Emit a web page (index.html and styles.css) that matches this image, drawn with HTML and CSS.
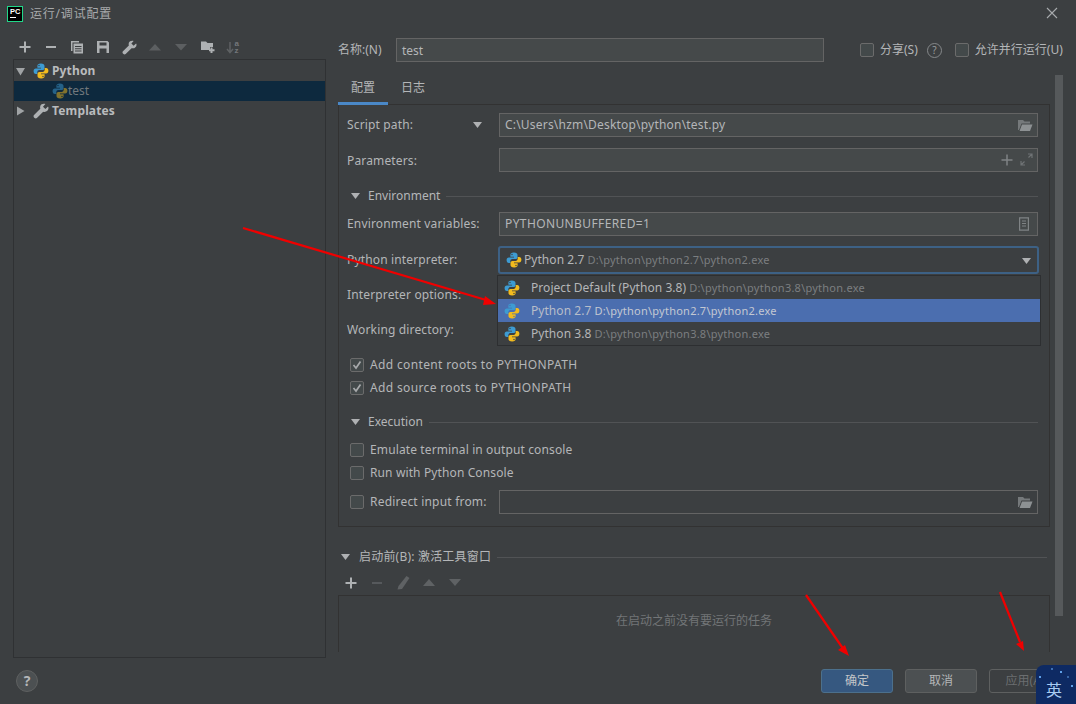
FILE: index.html
```html
<!DOCTYPE html>
<html lang="zh">
<head>
<meta charset="utf-8">
<title>运行/调试配置</title>
<link rel="stylesheet" href="styles.css">
</head>
<body>
<svg class="defs" width="0" height="0" aria-hidden="true">
  <symbol id="py" viewBox="0 0 16 16">
    <path fill="#3d9bd2" d="M7.9 .6C5.2 .6 4.4 1.7 4.4 3V4.8H8V5.5H2.9C1.4 5.5 .6 6.6 .6 8.2S1.4 11 2.9 11H4.3V9.2C4.3 8 5.2 7.1 6.4 7.1H9.6C10.7 7.1 11.5 6.3 11.5 5.2V3C11.5 1.5 10.3 .6 7.9 .6ZM6 1.8A.7 .7 0 1 1 6 3.2 .7 .7 0 0 1 6 1.8Z"/>
    <path fill="#f2bb1e" d="M8.1 15.4C10.8 15.4 11.6 14.3 11.6 13V11.2H8V10.5H13.1C14.6 10.5 15.4 9.4 15.4 7.8S14.6 5 13.1 5H11.7V6.8C11.7 8 10.8 8.9 9.6 8.9H6.4C5.3 8.9 4.5 9.7 4.5 10.8V13C4.5 14.5 5.7 15.4 8.1 15.4ZM10 14.2A.7 .7 0 1 1 10 12.8 .7 .7 0 0 1 10 14.2Z"/>
  </symbol>
  <symbol id="wrench" viewBox="0 0 16 16">
    <path fill="currentColor" d="M15 3.6 12.4 6.1 10 3.7 12.4 1.1C10.4 .3 8 1 7.3 3 7 4 7 5 7.3 5.8L1 12.1C.4 12.8 .4 13.8 1 14.4L1.6 15C2.2 15.6 3.2 15.6 3.9 15L10.2 8.7C12.8 9.6 15.6 7.6 15.5 5 15.5 4.5 15.3 4 15 3.6Z"/>
  </symbol>
  <symbol id="folder" viewBox="0 0 16 16">
    <path fill="#75797b" d="M1 3H6L7.5 4.5H13V6.5H4.5L2 13H1Z"/>
    <path fill="#8d9193" d="M5 7.5H15.5L13 14H2.6Z"/>
  </symbol>
</svg>

<header class="titlebar">
  <span class="logo"><b>PC</b><i></i></span>
  <span class="title">运行/调试配置</span>
  <svg class="close" width="12" height="12" viewBox="0 0 12 12"><path d="M1 1 11 11M11 1 1 11" stroke="#a8abad" stroke-width="1.1"/></svg>
</header>

<main class="main">
  <section class="side">
    <div class="toolbar">
      <span class="tool"><svg width="14" height="14" viewBox="0 0 14 14"><path d="M7 1.5V12.500M1.500 7H12.500" class="st2"/></svg></span>
      <span class="tool"><svg width="14" height="14" viewBox="0 0 14 14"><path d="M2 7H12" class="st2"/></svg></span>
      <span class="tool"><svg width="14" height="14" viewBox="0 0 14 14"><path fill="#aeb1b3" d="M1 1H9V2.500H2.500V11H1Z"/><path fill="#aeb1b3" fill-rule="evenodd" d="M3.500 3.500H13V13.500H3.500ZM5 6V7H11.500V6ZM5 8.300V9.300H11.500V8.300ZM5 10.600V11.600H11.500V10.600Z"/></svg></span>
      <span class="tool"><svg width="14" height="14" viewBox="0 0 14 14"><path fill="#aeb1b3" fill-rule="evenodd" d="M1 1H11.500L13 2.500V13H1ZM3.500 2.500V5.500H10.500V2.500ZM3.500 8.500V13H10.500V8.500Z"/></svg></span>
      <span class="tool"><svg class="ic-wrench" width="15" height="15"><use href="#wrench"/></svg></span>
      <span class="tool"><svg width="14" height="8" viewBox="0 0 14 8"><path d="M7 1 13 7.500H1Z" fill="#5c5f61"/></svg></span>
      <span class="tool"><svg width="14" height="8" viewBox="0 0 14 8"><path d="M7 7.500 13 1H1Z" fill="#5c5f61"/></svg></span>
      <span class="tool"><svg width="15" height="14" viewBox="0 0 15 14"><path fill="#aeb1b3" d="M1 1.500H6L7.500 3H13V7H10V10H1Z"/><path d="M11.500 7.500V13M9 10.300H14.500" class="st2"/></svg></span>
      <span class="tool"><svg width="15" height="16" viewBox="0 0 15 16"><path d="M4 3V13M1 10 4 13.500 7 10" fill="none" stroke="#5f6264" stroke-width="1.500"/><text x="8.500" y="7" class="az">a</text><text x="8.500" y="14" class="az">z</text></svg></span>
    </div>
    <div class="tree">
      <div class="tree-row">
        <svg class="tw" width="9" height="9" viewBox="0 0 9 9"><path d="M0 1H9L4.500 8.500Z" fill="#a0a3a5"/></svg>
        <svg class="tree-ic" width="16" height="16"><use href="#py"/></svg>
        <b>Python</b>
      </div>
      <div class="tree-row sel">
        <svg class="tree-ic dim" width="16" height="16"><use href="#py"/></svg>
        <span>test</span>
      </div>
      <div class="tree-row">
        <svg class="tw" width="9" height="10" viewBox="0 0 9 10"><path d="M1 .5V9.500L8.500 5Z" fill="#a0a3a5"/></svg>
        <svg class="tree-ic ic-wrench" width="16" height="16"><use href="#wrench"/></svg>
        <b>Templates</b>
      </div>
    </div>
  </section>

  <section class="content">
    <div class="name-row">
      <label class="name-label">名称:(N)</label>
      <div class="field name-field">test</div>
      <span class="cb share"></span><span class="opt">分享(S)</span>
      <span class="qm">?</span>
      <span class="cb par"></span><span class="opt">允许并行运行(U)</span>
    </div>
    <div class="scroll-wrap">
      <div class="scroll-body">
        <div class="tabs">
          <span class="tab on">配置</span>
          <span class="tab">日志</span>
        </div>
        <div class="panel">
          <div class="row r-script">
            <span class="lab lab-short">Script path:</span>
            <svg class="drop" width="9" height="6" viewBox="0 0 9 6"><path d="M0 0H9L4.500 6Z" fill="#afb1b3"/></svg>
            <div class="field grow">C:\Users\hzm\Desktop\python\test.py<svg class="fo" width="16" height="16"><use href="#folder"/></svg></div>
          </div>
          <div class="row r-gap">
            <span class="lab lab-low">Parameters:</span>
            <div class="field grow">
              <span class="fi-icons">
                <svg width="12" height="12" viewBox="0 0 12 12"><path d="M6 .5V11.500M.5 6H11.500" stroke="#7f8385" stroke-width="1.500"/></svg>
                <svg width="13" height="13" viewBox="0 0 13 13"><path d="M8 1H12V5M12 1 8.500 4.500M5 12H1V8M1 12 4.500 8.500" fill="none" stroke="#6f7375" stroke-width="1.200"/></svg>
              </span>
            </div>
          </div>
          <div class="sect sect-env">
            <svg class="sect-tri" width="9" height="6" viewBox="0 0 9 6"><path d="M0 0H9L4.500 6Z" fill="#afb1b3"/></svg>
            <span>Environment</span><i></i>
          </div>
          <div class="row r-env">
            <span class="lab">Environment variables:</span>
            <div class="field grow caps">PYTHONUNBUFFERED=1<svg class="fo doc" width="14" height="14" viewBox="0 0 14 14"><path fill="none" stroke="#7f8385" stroke-width="1.200" d="M2.600 .8H11.400V13.200H2.600Z"/><path stroke="#7f8385" d="M5 4H9M5 6.500H9M5 9H9"/></svg></div>
          </div>
          <div class="row r-interp">
            <span class="lab">Python interpreter:</span>
            <div class="combo">
              <svg class="pi" width="16" height="16"><use href="#py"/></svg>
              <span class="pname">Python 2.7</span> <span class="ppath">D:\python\python2.7\python2.exe</span>
              <svg class="combo-tri" width="9" height="6" viewBox="0 0 9 6"><path d="M0 0H9L4.500 6Z" fill="#afb1b3"/></svg>
            </div>
          </div>
          <div class="row r-opts">
            <span class="lab lab-low">Interpreter options:</span>
            <div class="field grow"></div>
          </div>
          <div class="row r-gap">
            <span class="lab lab-low">Working directory:</span>
            <div class="field grow"></div>
          </div>
          <div class="check wide r-c1"><span class="cb on"><svg width="10" height="10" viewBox="0 0 10 10"><path d="M1.500 5 4 8 8.500 1.500" fill="none" stroke="#a7a9ab" stroke-width="1.700"/></svg></span>Add content roots to PYTHONPATH</div>
          <div class="check wide"><span class="cb on"><svg width="10" height="10" viewBox="0 0 10 10"><path d="M1.500 5 4 8 8.500 1.500" fill="none" stroke="#a7a9ab" stroke-width="1.700"/></svg></span>Add source roots to PYTHONPATH</div>
          <div class="sect sect-exec">
            <svg class="sect-tri" width="9" height="6" viewBox="0 0 9 6"><path d="M0 0H9L4.500 6Z" fill="#afb1b3"/></svg>
            <span>Execution</span><i></i>
          </div>
          <div class="check r-c3"><span class="cb"></span>Emulate terminal in output console</div>
          <div class="check"><span class="cb"></span>Run with Python Console</div>
          <div class="row r-red">
            <span class="red-lab"><span class="cb"></span>Redirect input from:</span>
            <div class="field grow off"><svg class="fo" width="16" height="16"><use href="#folder"/></svg></div>
          </div>
        </div>
        <div class="before">
          <svg class="sect-tri" width="9" height="6" viewBox="0 0 9 6"><path d="M0 0H9L4.500 6Z" fill="#afb1b3"/></svg>
          <span>启动前(B): 激活工具窗口</span><i></i>
        </div>
        <div class="b-tools">
          <span class="btool"><svg width="12" height="12" viewBox="0 0 12 12"><path d="M6 .5V11.500M.5 6H11.500" class="st2"/></svg></span>
          <span class="btool"><svg width="12" height="12" viewBox="0 0 12 12"><path d="M1 6H11" stroke="#5c5f61" stroke-width="1.700"/></svg></span>
          <span class="btool"><svg width="15" height="15" viewBox="0 0 15 15"><path d="M10.500 1 13.500 3 6 14 1.500 14.500 2.500 11Z" fill="#5f6264"/></svg></span>
          <span class="btool"><svg width="12" height="7" viewBox="0 0 12 7"><path d="M6 0 12 7H0Z" fill="#5f6264"/></svg></span>
          <span class="btool"><svg width="12" height="7" viewBox="0 0 12 7"><path d="M6 7 12 0H0Z" fill="#5f6264"/></svg></span>
        </div>
        <div class="task-box">在启动之前没有要运行的任务</div>
      </div>
      <div class="scrollbar"></div>
    </div>
  </section>
</main>

<footer class="footer">
  <span class="help">?</span>
  <span class="btn def">确定</span>
  <span class="btn">取消</span>
  <span class="btn dis">应用(A)</span>
</footer>

<div class="popup">
  <div class="pop-row"><svg width="16" height="16"><use href="#py"/></svg><span class="pname">Project Default (Python 3.8)</span> <span class="ppath">D:\python\python3.8\python.exe</span></div>
  <div class="pop-row cur"><svg width="16" height="16"><use href="#py"/></svg><span class="pname">Python 2.7</span> <span class="ppath">D:\python\python2.7\python2.exe</span></div>
  <div class="pop-row"><svg width="16" height="16"><use href="#py"/></svg><span class="pname">Python 3.8</span> <span class="ppath">D:\python\python3.8\python.exe</span></div>
</div>

<svg class="arrows" width="1076" height="704" viewBox="0 0 1076 704" aria-hidden="true">
  <g stroke="#f00000" stroke-width="2.200" fill="#f00000">
    <path d="M243 228 486 300"/><path stroke="none" d="M496 304 483 305 485 296Z"/>
    <path d="M806 595 844 650"/><path stroke="none" d="M849 656 838 650 845 645Z"/>
    <path d="M1000 592 1020 642"/><path stroke="none" d="M1024 651 1016 644 1023 641Z"/>
  </g>
</svg>

<div class="ime">
  <i class="star s1"></i><i class="star s2"></i><i class="star s3"></i><i class="star s4"></i><i class="star s5"></i>
  英
</div>
</body>
</html>
```
FILE: styles.css
```css
* { box-sizing: border-box; }
html, body { margin: 0; padding: 0; }
body {
  position: relative;
  width: 1076px;
  height: 704px;
  overflow: hidden;
  background: #3c3f41;
  color: #b4b6b8;
  font: 12px/16px "Noto Sans", "Noto Sans CJK SC", sans-serif;
}
.defs { position: absolute; }
.titlebar {
  height: 38px;
  padding: 6px 18px 0 7px;
  display: flex;
  align-items: flex-start;
}
.logo {
  width: 16px; height: 16px;
  background: #000;
  border: 1px solid #21d789;
  color: #fff;
  display: flex;
  flex-direction: column;
  padding: 1px 0 0 2px;
}
.logo b { font: 700 7.5px/8px "Liberation Sans", sans-serif; }
.logo i { display: block; width: 6px; height: 1px; background: #fff; margin-top: 1px; }
.title { margin-left: 7px; color: #a7a9ab; line-height: 16px; letter-spacing: .8px; }
.close { margin-left: auto; margin-top: 1px; }

.main { display: flex; height: 620px; padding-left: 13px; }
.side { width: 313px; margin-right: 12px; display: flex; flex-direction: column; }
.toolbar { height: 21px; display: flex; margin-left: -1px; }
.tool { width: 26px; height: 18px; display: flex; align-items: center; justify-content: center; }
.st2 { stroke: #aeb1b3; stroke-width: 2; fill: none; }
.az { font: 700 8px "Liberation Sans", sans-serif; fill: #74777a; }
.ic-wrench { color: #aeb1b3; }
.tree { flex: 1; border: 1px solid #2f3133; padding-top: 1px; }
.tree-row { height: 20px; display: flex; align-items: center; padding-left: 2px; font-size: 12px; color: #b9bbbd; }
.tree-row b { font-weight: 700; margin-left: 3px; letter-spacing: .15px; }
.tw { width: 9px; margin-right: 8px; }
.tree-ic { flex: none; }
.tree-row.sel { background: #0d293e; color: #72787c; padding-left: 38px; }
.tree-ic.dim { opacity: .5; }

.content { width: 727px; display: flex; flex-direction: column; }
.name-row { height: 24px; display: flex; align-items: center; flex: none; }
.name-label { width: 58px; color: #b4b6b8; }
.field {
  height: 24px;
  background: #45494a;
  border: 1px solid #646464;
  padding: 0 5px;
  line-height: 21px;
  color: #b4b6b8;
  display: flex;
  align-items: center;
  position: relative;
}
.panel .field { padding-bottom: 2px; letter-spacing: .2px; }
.panel .field.caps { letter-spacing: .39px; }
.name-field { width: 428px; }
.cb {
  display: inline-flex;
  align-items: center;
  justify-content: center;
  width: 14px; height: 14px;
  border: 1px solid #6b6b6b;
  border-radius: 2px;
  background: #43494a;
  flex: none;
}
.share { margin-left: 36px; }
.opt { margin-left: 6px; }
.qm {
  width: 15px; height: 15px; margin-left: 9px;
  border: 1px solid #85888a; border-radius: 50%;
  font-size: 10px; line-height: 13px; text-align: center; color: #9a9c9e;
}
.par { margin-left: 13px; }

.scroll-wrap { display: flex; gap: 5px; margin-top: 13px; flex: 1; min-height: 0; }
.scroll-body { width: 712px; flex: none; display: flex; flex-direction: column; overflow: hidden; height: 577px; }
.scrollbar { width: 8px; height: 541px; background: #56595b; flex: none; }
.tabs { display: flex; height: 29px; flex: none; position: relative; }
.tab { width: 50px; height: 30px; text-align: center; padding-top: 5px; font-size: 12px; }
.tab.on { border-bottom: 3px solid #4a88c7; position: relative; z-index: 1; }
.panel {
  flex: none;
  height: 423px;
  border: 1px solid #323232;
  padding: 8px 11px 0 8px;
}
.row { display: flex; align-items: center; height: 24px; }
.lab { width: 152px; flex: none; letter-spacing: .15px; }
.lab-short { width: 126px; }
.lab-low { padding-top: 2px; }
.drop { margin-right: 17px; flex: none; }
.grow { flex: 1; }
.r-gap { margin-top: 11px; }
.fo { position: absolute; right: 4px; top: 3px; }
.fo.doc { right: 6px; top: 4px; }
.fi-icons { position: absolute; right: 4px; top: 4px; display: flex; align-items: center; gap: 7px; }
.sect { display: flex; align-items: center; height: 18px; padding-left: 4px; }
.sect-tri { flex: none; margin-right: 8px; }
.sect i, .before i { flex: 1; height: 1px; background: #515355; margin-left: 6px; }
.sect-env { margin-top: 15px; }
.r-env { margin-top: 7px; }
.r-interp { margin-top: 10px; height: 28px; }
.combo {
  flex: 1;
  height: 28px;
  margin-left: -1px;
  margin-right: -1px;
  border: 2px solid #3d6185;
  border-radius: 3px;
  display: flex;
  align-items: center;
  padding-left: 6px;
  position: relative;
  white-space: pre;
}
.pi { margin-right: 2px; }
.pname { color: #b4b6b8; letter-spacing: .05px; }
.ppath { color: #7b7e80; font-size: 11px; margin-left: 3px; letter-spacing: .24px; }
.combo-tri { position: absolute; right: 6px; top: 10px; }
.r-opts { margin-top: 8px; }
.check { display: flex; align-items: center; height: 23px; padding-left: 3px; letter-spacing: .12px; }
.check.wide { letter-spacing: .36px; }
.check .cb { margin-right: 6px; }
.r-c1 { margin-top: 12px; }
.sect-exec { margin-top: 13px; height: 20px; }
.r-c3 { margin-top: 6px; }
.r-red { margin-top: 6px; }
.red-lab { width: 152px; flex: none; display: flex; align-items: center; padding-left: 3px; white-space: nowrap; letter-spacing: .2px; }
.red-lab .cb { margin-right: 6px; }
.field.off { background: #3c3f41; }

.before { display: flex; align-items: center; height: 18px; margin-top: 21px; padding: 0 3px; letter-spacing: .2px; }
.before .sect-tri { margin-right: 9px; }
.b-tools { display: flex; height: 25px; margin-top: 4px; flex: none; align-items: center; }
.btool { width: 26px; display: flex; justify-content: center; align-items: center; }
.task-box {
  border: 1px solid #323232;
  border-bottom: 0;
  height: 57px;
  flex: none;
  text-align: center;
  padding-top: 17px;
  color: #727577;
}

.footer { display: flex; align-items: center; height: 46px; padding: 0 0 0 16px; }
.help {
  width: 22px; height: 22px;
  border-radius: 50%;
  background: #4c5052;
  border: 1px solid #5e6060;
  color: #b4b6b8;
  font: 700 14px/20px "Noto Sans", sans-serif;
  text-align: center;
  margin-right: 783px;
}
.btn {
  width: 72px; height: 24px;
  background: #4c5052;
  border: 1px solid #5e6060;
  border-radius: 3px;
  text-align: center;
  line-height: 22px;
  margin-right: 12px;
  flex: none;
}
.btn.def { background: #365880; border-color: #4c708c; color: #c4c6c8; }
.btn.dis { background: transparent; color: #6b6e70; }

.popup {
  position: absolute;
  left: 497px; top: 275px;
  width: 544px; height: 71px;
  background: #3c3f41;
  border: 1px solid #2d2f31;
}
.pop-row { height: 23px; display: flex; align-items: center; padding-left: 6px; white-space: pre; }
.pop-row svg { margin-right: 11px; flex: none; }
.pop-row.cur { background: #4b6eaf; }
.pop-row.cur .pname { color: #b7bdc9; }
.pop-row.cur .ppath { color: #c3c8d2; }

.arrows { position: absolute; left: 0; top: 0; pointer-events: none; }

.ime {
  position: absolute;
  left: 1036px; top: 665px;
  width: 40px; height: 39px;
  background: #0e2a63;
  border-radius: 8px 0 0 0;
  color: #a9ccf2;
  font-size: 16px;
  line-height: 50px;
  text-align: center;
  padding-right: 4px;
}
.star { position: absolute; width: 2px; height: 2px; background: #5fa0e8; }
.s1 { left: 3px; top: 11px; }
.s2 { left: 24px; top: 6px; }
.s3 { left: 35px; top: 20px; }
.s4 { left: 15px; top: 3px; opacity: .6; }
.s5 { left: 31px; top: 11px; opacity: .5; }
```
